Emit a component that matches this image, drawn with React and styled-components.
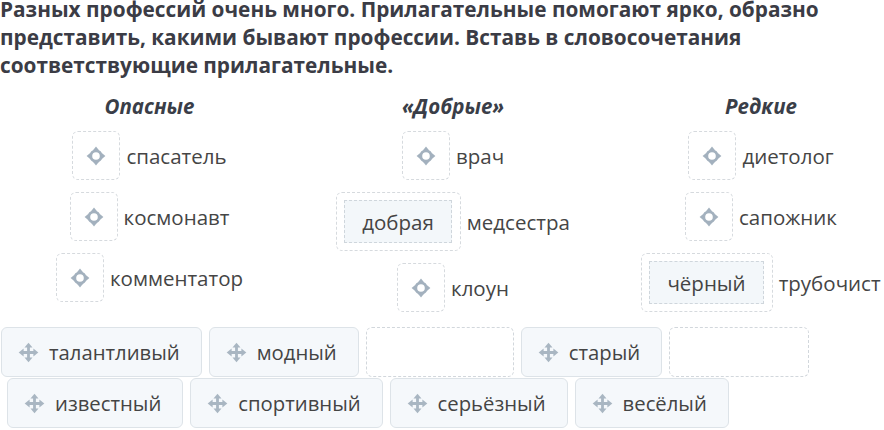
import styled, { createGlobalStyle } from "styled-components";

const GlobalStyle = createGlobalStyle`
  html, body {
    margin: 0;
    padding: 0;
    background: #fff;
    overflow: hidden;
  }
  body {
    font-family: "Open Sans", "Noto Sans", sans-serif;
    color: #444;
  }
`;

const columns = [
  {
    title: "Опасные",
    rows: [
      { word: "спасатель" },
      { word: "космонавт" },
      { word: "комментатор" },
    ],
  },
  {
    title: "«Добрые»",
    rows: [
      { word: "врач" },
      { word: "медсестра", filled: "добрая" },
      { word: "клоун" },
    ],
  },
  {
    title: "Редкие",
    rows: [
      { word: "диетолог" },
      { word: "сапожник" },
      { word: "трубочист", filled: "чёрный" },
    ],
  },
];

const bankRows = [
  {
    offset: 1,
    items: [
      { text: "талантливый" },
      { text: "модный" },
      { empty: 148 },
      { text: "старый" },
      { empty: 140 },
    ],
  },
  {
    offset: 7,
    items: [
      { text: "известный" },
      { text: "спортивный" },
      { text: "серьёзный" },
      { text: "весёлый" },
    ],
  },
];

// ring with four small pointers — the drop target mark
const TargetIcon = () => (
  <svg width="20" height="20" viewBox="0 0 20 20" fill="#a3b1be">
    <circle cx="10" cy="10" r="5.2" fill="none" stroke="#a3b1be" strokeWidth="2.8" />
    <path d="M10 0.6 L13 4.2 H7 Z" />
    <path d="M10 19.4 L7 15.8 H13 Z" />
    <path d="M0.6 10 L4.2 7 V13 Z" />
    <path d="M19.4 10 L15.8 13 V7 Z" />
  </svg>
);

const MoveIcon = () => (
  <svg width="21" height="21" viewBox="0 0 24 24" fill="#a9b6c2">
    <path d="M12 5 V19 M5 12 H19" stroke="#a9b6c2" strokeWidth="3.2" />
    <path d="M12 0.8 L16.6 6.4 H7.4 Z" />
    <path d="M12 23.2 L7.4 17.6 H16.6 Z" />
    <path d="M0.8 12 L6.4 7.4 V16.6 Z" />
    <path d="M23.2 12 L17.6 16.6 V7.4 Z" />
  </svg>
);

export default function App() {
  return (
    <>
      <GlobalStyle />
      <Page>
        <Task>
          Разных профессий очень много. Прилагательные помогают ярко, образно
          представить, какими бывают профессии. Вставь в словосочетания
          соответствующие прилагательные.
        </Task>
        <Columns>
          {columns.map((col) => (
            <Column key={col.title}>
              <ColumnTitle>{col.title}</ColumnTitle>
              {col.rows.map((row) => (
                <Row key={row.word}>
                  <DropBox $filled={!!row.filled}>
                    {row.filled ? <Placed>{row.filled}</Placed> : <TargetIcon />}
                  </DropBox>
                  <Word>{row.word}</Word>
                </Row>
              ))}
            </Column>
          ))}
        </Columns>
        <Bank>
          {bankRows.map((br, i) => (
            <BankRow key={i} $offset={br.offset}>
              {br.items.map((it, j) =>
                it.empty ? (
                  <EmptySlot key={j} $width={it.empty} />
                ) : (
                  <Chip key={j}>
                    <MoveIcon />
                    <span>{it.text}</span>
                  </Chip>
                )
              )}
            </BankRow>
          ))}
        </Bank>
      </Page>
    </>
  );
}

const Page = styled.div`
  width: 920px;
  padding-top: 1px;
`;

const Task = styled.p`
  margin: -6px 0 0 0;
  width: 850px;
  font-size: 20.8px;
  line-height: 28px;
  font-weight: 700;
  color: #3b3c45;
`;

const Columns = styled.div`
  display: grid;
  grid-template-columns: 303px 304px 312px;
  margin: 15px 0 0 -2px;
  align-items: start;
`;

const Column = styled.div`
  display: flex;
  flex-direction: column;
  align-items: center;
  gap: 12px;
`;

const ColumnTitle = styled.div`
  font-size: 20.5px;
  line-height: 24px;
  font-weight: 700;
  font-style: italic;
  color: #3a3e48;
  margin-bottom: 1px;
`;

const Row = styled.div`
  display: flex;
  align-items: center;
  gap: 6px;
`;

const DropBox = styled.div`
  box-sizing: border-box;
  min-width: 48px;
  min-height: 49px;
  display: flex;
  align-items: center;
  justify-content: center;
  padding: ${(p) => (p.$filled ? "7px 8px 7px 7px" : "0")};
  border: 1px dashed #d6dade;
  border-radius: 6px;
`;

const Placed = styled.div`
  box-sizing: border-box;
  height: 43px;
  padding: 0 17px;
  display: flex;
  align-items: center;
  font-size: 20.5px;
  color: #444;
  background: #f3f7fa;
  border: 1px dashed #cfd6dc;
`;

const Word = styled.span`
  font-size: 20.5px;
  line-height: 28px;
  color: #454545;
`;

const Bank = styled.div`
  display: flex;
  flex-direction: column;
  gap: 1px;
  margin-top: 15px;
`;

const BankRow = styled.div`
  display: flex;
  gap: 7px;
  padding-left: ${(p) => p.$offset}px;
`;

const Chip = styled.div`
  box-sizing: border-box;
  height: 50px;
  display: flex;
  align-items: center;
  gap: 10px;
  padding: 0 21px 0 16px;
  font-size: 20.3px;
  color: #444;
  background: #f5f8fb;
  border: 1px solid #dde3e8;
  border-radius: 6px;
`;

const EmptySlot = styled.div`
  box-sizing: border-box;
  height: 50px;
  width: ${(p) => p.$width}px;
  border: 1px dashed #d2d7dc;
  border-radius: 6px;
  background: #fff;
`;
